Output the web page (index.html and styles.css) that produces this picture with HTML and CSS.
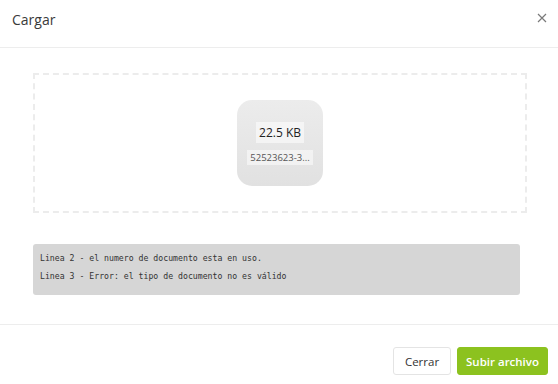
FILE: index.html
```html
<!DOCTYPE html>
<html lang="es">
<head>
    <meta charset="UTF-8">
    <meta name="viewport" content="width=device-width, initial-scale=1.0">
    <title>Cargar</title>
    <link rel="stylesheet" href="styles.css">
</head>
<body>
    <div class="modal">
        <div class="modal-header">
            <h5 class="modal-title">Cargar</h5>
            <button class="close" aria-label="Cerrar">
                <svg width="10" height="10" viewBox="0 0 10 10">
                    <path d="M1 1 L9 9 M9 1 L1 9" stroke="#7a7a7a" stroke-width="1.2" fill="none"/>
                </svg>
            </button>
        </div>
        <div class="modal-body">
            <div class="dropzone">
                <div class="preview">
                    <div class="size"><strong>22.5</strong> KB</div>
                    <div class="filename">52523623-3...</div>
                </div>
            </div>
            <div class="errors">
                <div>Linea 2 - el numero de documento esta en uso.</div>
                <div>Linea 3 - Error: el tipo de documento no es válido</div>
            </div>
        </div>
        <div class="modal-footer">
            <button class="btn btn-light">Cerrar</button>
            <button class="btn btn-green">Subir archivo</button>
        </div>
    </div>
</body>
</html>
```
FILE: styles.css
```css
body {
    margin: 0;
    background: #fff;
    font-family: "Open Sans", sans-serif;
    color: #333;
}
.modal {
    width: 558px;
    height: 384px;
    display: flex;
    flex-direction: column;
}
.modal-header {
    height: 48px;
    border-bottom: 1px solid #ededed;
    display: flex;
    align-items: center;
    justify-content: space-between;
    padding: 0 11px 0 12px;
    box-sizing: border-box;
}
.modal-title {
    margin: 0;
    margin-top: -9px;
    font-size: 14px;
    font-weight: 400;
    color: #3a3a3a;
}
.close {
    background: none;
    border: none;
    padding: 0;
    margin-top: -11px;
    cursor: pointer;
    display: flex;
}
.modal-body {
    padding: 25px 31px 29px 33px;
    border-bottom: 1px solid #ededed;
}
.dropzone {
    height: 140px;
    border: 2px dashed #ececec;
    box-sizing: border-box;
    display: flex;
    align-items: center;
    justify-content: center;
}
.preview {
    width: 86px;
    height: 86px;
    border-radius: 15px;
    background: linear-gradient(#ececec, #e1e1e1);
    display: flex;
    flex-direction: column;
    align-items: center;
    justify-content: center;
    gap: 7px;
}
.size {
    background: rgba(255, 255, 255, 0.55);
    padding: 2px 3px;
    font-size: 12px;
    color: #222;
}
.size strong {
    font-weight: 400;
}
.filename {
    background: rgba(255, 255, 255, 0.5);
    padding: 1px 3px;
    font-size: 9.5px;
    color: #555;
}
.errors {
    margin-top: 31px;
    margin-right: 7px;
    background: #d6d6d6;
    border-radius: 3px;
    padding: 5px 7px 10px;
    font-family: "DejaVu Sans Mono", monospace;
    font-size: 8.2px;
    line-height: 18px;
    color: #333;
}
.modal-footer {
    flex: 1;
    display: flex;
    justify-content: flex-end;
    align-items: flex-start;
    padding: 22px 10px 0 0;
    gap: 6px;
}
.btn {
    height: 28px;
    border-radius: 3px;
    font-family: "Open Sans", sans-serif;
    font-size: 11.5px;
    cursor: pointer;
    padding: 0;
}
.btn-light {
    width: 58px;
    background: #fff;
    border: 1px solid #e4e4e4;
    color: #333;
}
.btn-green {
    width: 91px;
    background: #8cc21f;
    border: 1px solid #8cc21f;
    color: #fff;
    font-weight: 600;
}
```
